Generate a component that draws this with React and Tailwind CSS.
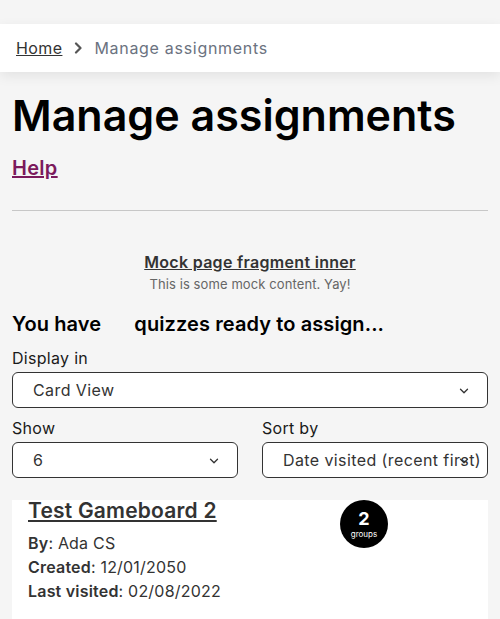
import React from 'react'

const Chevron = ({ className }) => (
  <svg className={className} viewBox="0 0 16 16" fill="none" stroke="currentColor" strokeWidth="1.5" strokeLinecap="round" strokeLinejoin="round">
    <path d="M4 6l4 4 4-4" />
  </svg>
)

const Select = ({ value, className = '', clip = 'pr-[18px]' }) => (
  <div className={`relative h-9 rounded-md border border-[#333] bg-white ${className}`}>
    <div className={`h-full overflow-hidden whitespace-nowrap pl-5 ${clip} text-base leading-[34px] tracking-[0.4px] text-[#333]`}>{value}</div>
    <Chevron className="absolute right-4 top-[11px] h-3.5 w-3.5 text-[#333]" />
  </div>
)

export default function App() {
  return (
    <div className="min-h-[619px] bg-[#f5f5f5] pt-6 font-['Inter',sans-serif] text-[#1a1a1a]">
      {/* Breadcrumb */}
      <div className="flex h-12 items-center bg-white px-4 shadow-[0_4px_12px_rgba(0,0,0,0.08)]">
        <a className="text-base tracking-[0.4px] text-[#333] underline">Home</a>
        <svg className="ml-[10px] mr-[10px] h-3 w-3 text-[#555]" viewBox="0 0 12 12" fill="none" stroke="currentColor" strokeWidth="2.2" strokeLinecap="round" strokeLinejoin="round">
          <path d="M4 1.5l4.5 4.5L4 10.5" />
        </svg>
        <span className="text-base tracking-[0.7px] text-[#6b7280]">Manage assignments</span>
      </div>

      <div className="px-3">
        <h1 className="mt-[19px] text-[43px] font-semibold leading-[48px] text-black">Manage assignments</h1>
        <a className="mt-[15px] inline-block text-xl font-semibold leading-7 tracking-[0.3px] text-[#7b1a5c] underline">Help</a>
        <hr className="mt-[28px] border-t border-[#c7c7c7]" />

        <div className="mt-[41px] text-center">
          <div className="text-base font-semibold leading-5 tracking-[0.3px] text-[#333] underline">Mock page fragment inner</div>
          <div className="mt-1 text-[13px] leading-4 tracking-[0.1px] text-[#666]">This is some mock content. Yay!</div>
        </div>

        <div className="mt-[20px] text-xl font-semibold leading-6 tracking-[0.1px] text-black">
          You have <span className="inline-block w-[28px]"></span>quizzes ready to assign...
        </div>

        <div className="mt-[10px] text-base leading-6 tracking-[0.3px] text-[#1a1a1a]">Display in</div>
        <Select value="Card View" className="mt-[2px]" />

        <div className="mt-[8px] grid grid-cols-2 gap-6 tracking-[0.3px]">
          <div>
            <div className="text-base leading-6">Show</div>
            <Select value="6" className="mt-[2px]" />
          </div>
          <div>
            <div className="text-base leading-6">Sort by</div>
            <Select value="Date visited (recent first)" className="mt-[2px]" clip="pr-6" />
          </div>
        </div>

        {/* Card */}
        <div className="relative mt-[22px] bg-white px-4 pb-6">
          <a className="block text-[21px] font-semibold leading-[22px] tracking-[0.2px] text-[#333] underline">Test Gameboard 2</a>
          <div className="absolute left-[328px] top-0 flex h-12 w-12 flex-col items-center justify-center rounded-full bg-black text-white">
            <span className="text-lg font-bold leading-5">2</span>
            <span className="text-[8px] leading-[10px]">groups</span>
          </div>
          <div className="mt-[9px] text-base leading-6 tracking-[0.2px] text-[#333]">
            <div><b className="font-semibold">By</b>: Ada CS</div>
            <div><b className="font-semibold">Created</b>: 12/01/2050</div>
            <div><b className="font-semibold">Last visited</b>: 02/08/2022</div>
          </div>
        </div>
      </div>
    </div>
  )
}
